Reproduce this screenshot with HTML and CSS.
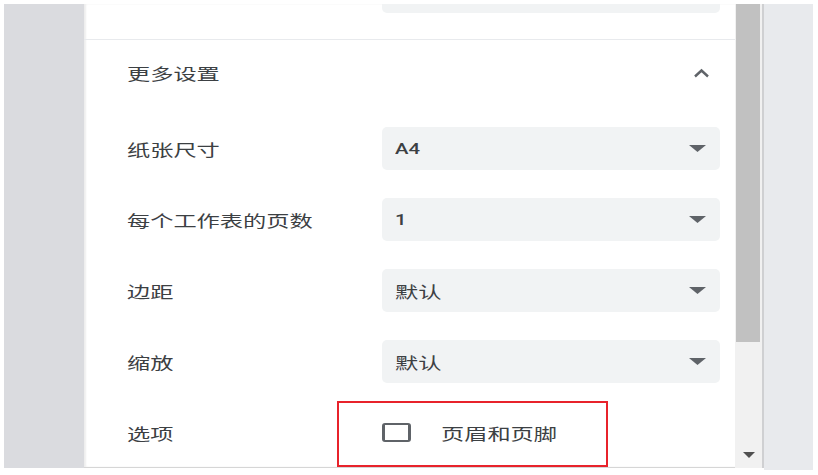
FILE: index.html
```html
<!DOCTYPE html>
<html lang="zh-CN">
<head>
  <meta charset="UTF-8">
  <meta name="viewport" content="width=device-width, initial-scale=1.0">
  <title>打印设置</title>
  <link rel="stylesheet" href="styles.css">
</head>
<body>
  <div class="screen">
    <div class="app">
      <!-- page area on the left -->
      <div class="gutter"></div>

      <!-- settings panel -->
      <div class="panel">
        <div class="top-part">
          <div class="select-stub"></div>
        </div>

        <section class="more">
          <div class="more-head">
            <span class="label">更多设置</span>
            <svg class="chevron" width="17" height="10" viewBox="0 0 17 10">
              <path d="M2 8.5 L8.5 2.5 L15 8.5" fill="none" stroke="#5f6368" stroke-width="2.4"/>
            </svg>
          </div>

          <div class="setting">
            <span class="label">纸张尺寸</span>
            <div class="select">
              <span class="value latin">A4</span>
              <svg class="caret" width="17" height="7" viewBox="0 0 17 7"><path d="M0 0 H17 L8.5 7 Z" fill="#5f6368"/></svg>
            </div>
          </div>

          <div class="setting">
            <span class="label">每个工作表的页数</span>
            <div class="select">
              <span class="value latin">1</span>
              <svg class="caret" width="17" height="7" viewBox="0 0 17 7"><path d="M0 0 H17 L8.5 7 Z" fill="#5f6368"/></svg>
            </div>
          </div>

          <div class="setting">
            <span class="label">边距</span>
            <div class="select">
              <span class="value">默认</span>
              <svg class="caret" width="17" height="7" viewBox="0 0 17 7"><path d="M0 0 H17 L8.5 7 Z" fill="#5f6368"/></svg>
            </div>
          </div>

          <div class="setting">
            <span class="label">缩放</span>
            <div class="select">
              <span class="value">默认</span>
              <svg class="caret" width="17" height="7" viewBox="0 0 17 7"><path d="M0 0 H17 L8.5 7 Z" fill="#5f6368"/></svg>
            </div>
          </div>

          <div class="setting">
            <span class="label">选项</span>
            <label class="check">
              <span class="box"></span>
              <span class="value">页眉和页脚</span>
            </label>
          </div>
        </section>
      </div>

      <!-- scrollbar -->
      <div class="scrollbar">
        <div class="thumb"></div>
        <svg class="down" width="12" height="6" viewBox="0 0 12 6"><path d="M0 0 H12 L6 6 Z" fill="#505050"/></svg>
      </div>

      <!-- preview area -->
      <div class="preview"></div>
    </div>

    <!-- red annotation frame -->
    <div class="highlight"></div>
  </div>
</body>
</html>
```

FILE: styles.css
```css
body {
  margin: 0;
  background-color: #ffffff;
  font-family: "Noto Sans CJK SC", "Noto Sans", sans-serif;
  color: #3c4043;
}

.screen {
  position: relative;
  padding: 4px 5px 5px 4px;
  height: 466px;
}

.app {
  display: flex;
  align-items: flex-start;
  height: 466px;
}

.gutter {
  width: 80px;
  height: 464px;
  background-color: #dadbdf;
}

.panel {
  width: 651px;
  height: 463px;
  overflow: hidden;
  border-bottom: 1px solid #d6d6d6;
  box-shadow: inset 2px 0 2px #eeeeee;
}

.top-part {
  padding: 0 15px 26px 298px;
}

.select-stub {
  width: 338px;
  height: 9px;
  background-color: #f1f3f4;
  border-radius: 0 0 5px 5px;
}

.more {
  border-top: 1px solid #e8eaed;
  padding: 0 15px 0 43px;
}

.more-head {
  display: flex;
  align-items: center;
  justify-content: space-between;
  height: 65px;
  margin-bottom: 22px;
  padding-right: 10px;
}

/* the screenshot is stretched sideways, so the text is too */
.label,
.value {
  display: inline-block;
  font-size: 16px;
  line-height: 20px;
  white-space: nowrap;
  transform: scaleX(1.45);
  transform-origin: left center;
}

.value {
  color: #3c4043;
}

.latin {
  font-family: Roboto, "Noto Sans", sans-serif;
  font-size: 14px;
  font-weight: 500;
}

.setting {
  display: grid;
  grid-template-columns: 255px 338px;
  align-items: center;
  height: 43px;
  margin-bottom: 28px;
}

.select {
  display: flex;
  align-items: center;
  justify-content: space-between;
  height: 43px;
  padding: 0 14px 0 13px;
  background-color: #f1f3f4;
  border-radius: 5px;
}

.check {
  display: flex;
  align-items: center;
  gap: 30px;
}

.box {
  width: 23px;
  height: 15px;
  border-style: solid;
  border-color: #5f6368;
  border-width: 2px 3px;
  border-radius: 3px;
}

.scrollbar {
  display: flex;
  flex-direction: column;
  align-items: center;
  width: 27px;
  height: 464px;
  background-color: #f1f1f1;
  border-right: 2px solid #cfd0d2;
}

.thumb {
  width: 24px;
  height: 338px;
  margin-right: 2px;
  background-color: #c1c1c1;
}

.down {
  margin-top: auto;
  margin-bottom: 10px;
}

.preview {
  flex: 1;
  height: 466px;
  background-color: #e8eaed;
}

.highlight {
  position: absolute;
  left: 337px;
  top: 401px;
  width: 267px;
  height: 62px;
  border: 2px solid #e8232b;
}
```
